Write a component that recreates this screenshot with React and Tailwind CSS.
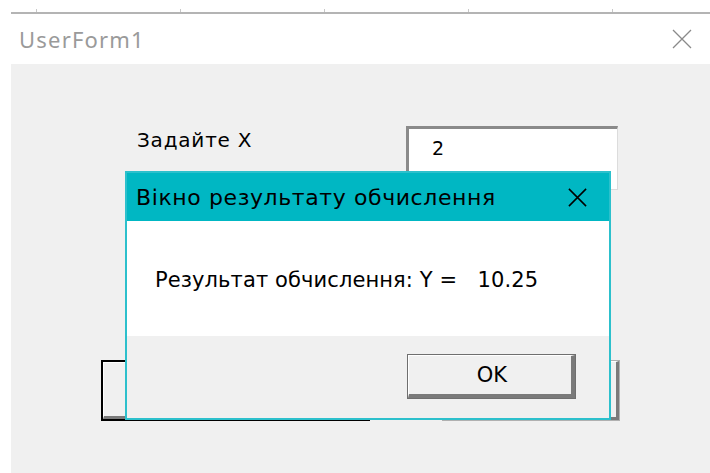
// Форма UserForm1 з вікном результату обчислення поверх неї

const WIN_FONT = { fontFamily: '"DejaVu Sans", Verdana, sans-serif' }

function CloseIcon({ size = 22, color = '#000', width = 1.4 }) {
  return (
    <svg width={size} height={size} viewBox="0 0 22 22" fill="none">
      <path d="M2 2 L20 20 M20 2 L2 20" stroke={color} strokeWidth={width} />
    </svg>
  )
}

function Ruler() {
  const ticks = [0, 1, 2, 3, 4]
  return (
    <div className="h-[14px] pl-[11px] flex flex-col justify-end">
      <div className="flex pl-[25px] h-[3px]">
        {ticks.map((t) => (
          <div key={t} className="w-[144px] shrink-0 border-l border-[#c8c8c8]" />
        ))}
      </div>
      <div className="h-[2px] bg-[#b4b4b4]" />
    </div>
  )
}

function ResultDialog() {
  return (
    <div
      className="absolute left-[125px] top-[171px] w-[486px] h-[249px] border-2 border-[#2cc0cc] flex flex-col bg-[#f0f0f0]"
      style={WIN_FONT}
    >
      {/* Заголовок вікна */}
      <div className="h-[48px] bg-[#00b7c3] flex items-center justify-between pl-[9px] pr-[21px]">
        <span className="text-[22px] tracking-[0.6px] text-black leading-none pt-[2px]">
          Вікно результату обчислення
        </span>
        <CloseIcon size={21} width={1.6} />
      </div>

      {/* Текст повідомлення */}
      <div className="h-[115px] bg-white flex items-center pl-[28px] pt-[3px]">
        <span className="text-[21px] tracking-[0.1px] text-black leading-none whitespace-pre">
          Результат обчислення: Y =   10.25
        </span>
      </div>

      {/* Кнопка OK */}
      <div className="flex-1 flex justify-end pr-[33px] pt-[18px]">
        <div className="w-[169px] h-[45px] border border-[#6f6f6f] flex">
          <div className="flex-1 border-t border-l border-white border-r-[4px] border-b-[4px] border-r-[#7a7a7a] border-b-[#7a7a7a] bg-[#f0f0f0] flex items-center justify-center">
            <span className="text-[21px] text-black leading-none pl-[4px]">OK</span>
          </div>
        </div>
      </div>
    </div>
  )
}

export default function App() {
  return (
    <div className="w-[710px] h-[473px] bg-white relative overflow-hidden flex flex-col">
      <Ruler />

      {/* Заголовок форми */}
      <div className="h-[50px] flex items-center justify-between pl-[19px] pr-[17px]">
        <span
          className="text-[22px] tracking-[1.2px] text-[#9a9a9a] leading-none"
          style={{ fontFamily: '"Noto Sans", "Open Sans", sans-serif' }}
        >
          UserForm1
        </span>
        <CloseIcon size={22} color="#8a8a8a" width={1.3} />
      </div>

      {/* Робоча область форми */}
      <div className="flex-1 ml-[11px] bg-[#f0f0f0] flex flex-col pt-[62px]" style={WIN_FONT}>
        <div className="flex items-start">
          <div className="w-[395px] pl-[126px] pt-[4px]">
            <span className="text-[20px] tracking-[0.8px] text-black leading-none">Задайте X</span>
          </div>
          <div className="w-[212px] h-[64px] border-t-[3px] border-l-[3px] border-t-[#8a8a8a] border-l-[#8a8a8a] border-r border-b border-r-[#dcdcdc] border-b-[#dcdcdc] bg-white pl-[23px] pt-[9px]">
            <span className="text-[19px] text-black leading-none">2</span>
          </div>
        </div>

        <div className="flex mt-[170px]">
          <div className="ml-[90px] w-[269px] h-[61px] border-2 border-black bg-[#f0f0f0]">
            <div className="h-full border-t border-l border-white border-b-[3px] border-b-[#7a7a7a] border-r-[3px] border-r-[#7a7a7a]" />
          </div>
          <div className="ml-[72px] w-[178px] h-[61px] border border-[#b0b0b0] bg-[#f0f0f0]">
            <div className="h-full border-t border-l border-white border-b-[3px] border-b-[#7a7a7a] border-r-[3px] border-r-[#7a7a7a]" />
          </div>
        </div>
      </div>

      <ResultDialog />
    </div>
  )
}
